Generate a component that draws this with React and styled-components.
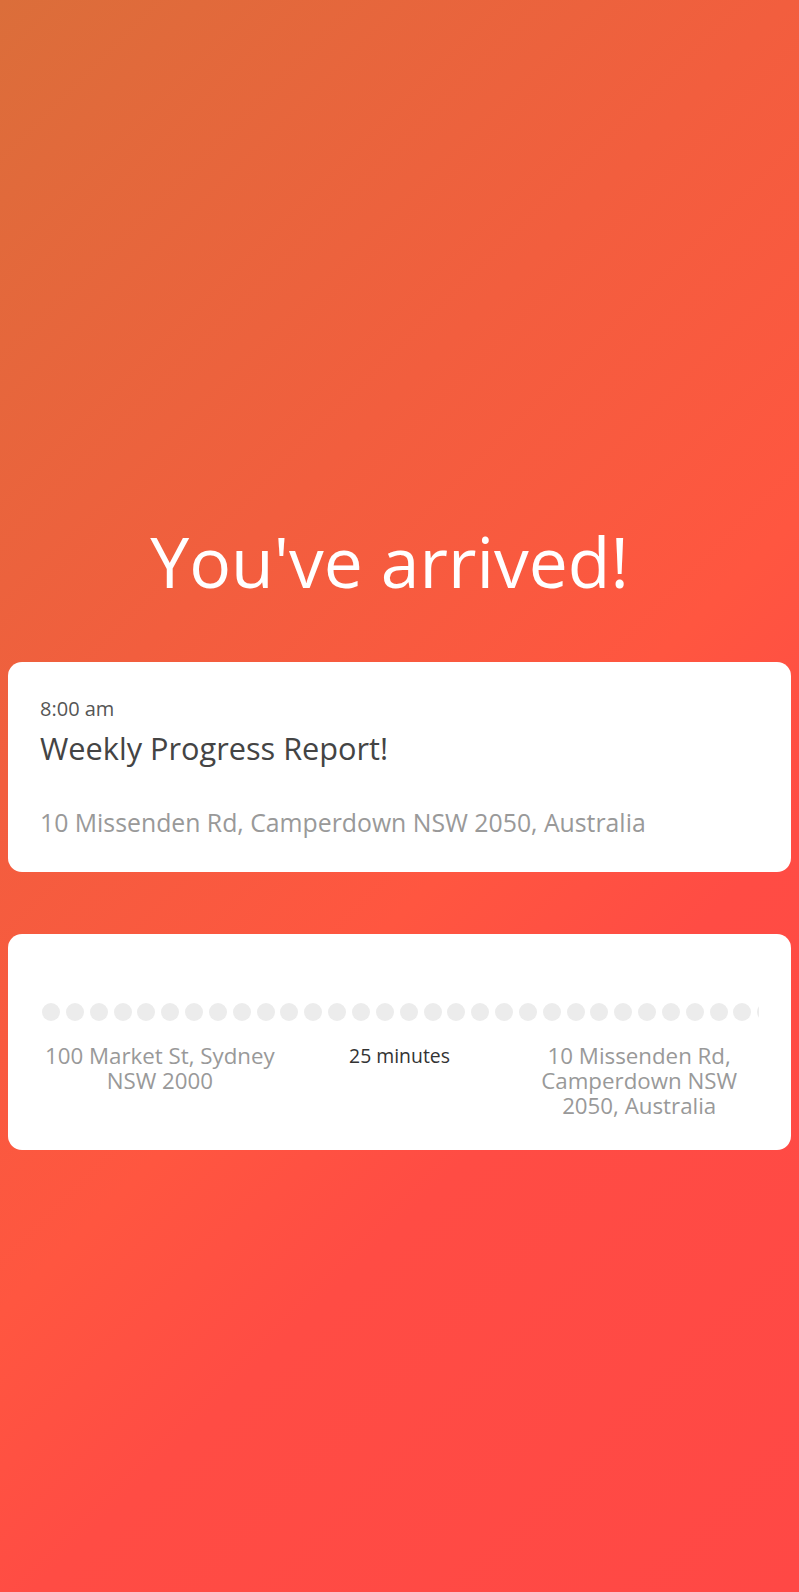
import React from "react";
import styled, { createGlobalStyle } from "styled-components";

const GlobalStyle = createGlobalStyle`
  html, body {
    margin: 0;
    padding: 0;
  }
  body {
    font-family: "Open Sans", "Noto Sans", sans-serif;
  }
  * { box-sizing: border-box; }
`;

const Page = styled.div`
  min-height: 100vh;
  padding: 0 8px;
  background: linear-gradient(
    135deg,
    #db6e3a 0%,
    #f25e3e 33%,
    #ff5640 55%,
    #ff4c44 68%,
    #ff4845 100%
  );
  display: flex;
  flex-direction: column;
`;

const Hero = styled.header`
  padding: 520px 20px 0 0;
  display: flex;
  justify-content: center;
`;

const Heading = styled.h1`
  margin: 0;
  font-size: 69.6px;
  line-height: 82.8px;
  font-weight: 400;
  color: #ffffff;
  text-align: center;
`;

const Card = styled.section`
  background: #ffffff;
  border-radius: 14px;
  padding: ${(p) => p.$pad};
  margin-top: ${(p) => p.$top}px;
`;

const Time = styled.div`
  font-size: 20px;
  line-height: 24px;
  color: #555555;
`;

const EventTitle = styled.h2`
  margin: 9px 0 0;
  font-size: 30.7px;
  line-height: 36px;
  font-weight: 400;
  color: #444444;
`;

const EventAddress = styled.div`
  margin-top: 41px;
  font-size: 24.8px;
  line-height: 30px;
  color: #999999;
`;

const Dots = styled.div`
  display: flex;
  gap: 5.85px;
  margin-left: 2px;
  overflow: hidden;
`;

const Dot = styled.span`
  flex: 0 0 18px;
  width: 18px;
  height: 18px;
  border-radius: 50%;
  background: #ececec;
`;

const Route = styled.div`
  display: grid;
  grid-template-columns: 1fr 1fr 1fr;
  align-items: start;
  margin-top: 22px;
`;

const Place = styled.div`
  text-align: center;
  font-size: 22.3px;
  line-height: 25px;
  color: #999999;
`;

const Duration = styled.div`
  text-align: center;
  font-size: 19.4px;
  line-height: 25px;
  color: #333333;
`;

export default function App() {
  const dots = Array.from({ length: 34 });
  return (
    <>
      <GlobalStyle />
      <Page>
        <Hero>
          <Heading>You've arrived!</Heading>
        </Hero>
        <Card $top={59} $pad="35px 32px 35px">
          <Time>8:00 am</Time>
          <EventTitle>Weekly Progress Report!</EventTitle>
          <EventAddress>10 Missenden Rd, Camperdown NSW 2050, Australia</EventAddress>
        </Card>
        <Card $top={62} $pad="69px 32px 32px">
          <Dots>
            {dots.map((_, i) => (
              <Dot key={i} />
            ))}
          </Dots>
          <Route>
            <Place>100 Market St, Sydney NSW 2000</Place>
            <Duration>25 minutes</Duration>
            <Place>10 Missenden Rd, Camperdown NSW 2050, Australia</Place>
          </Route>
        </Card>
      </Page>
    </>
  );
}
